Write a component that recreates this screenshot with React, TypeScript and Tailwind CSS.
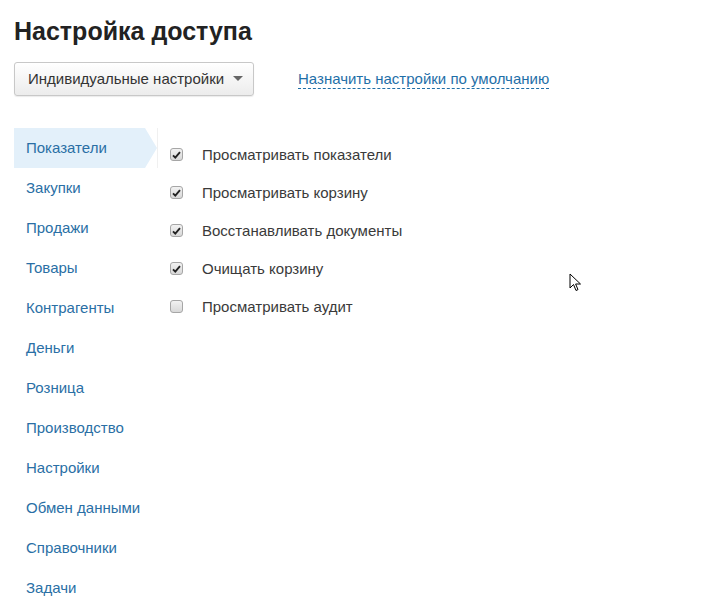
import React from 'react';

const sections = [
  'Показатели',
  'Закупки',
  'Продажи',
  'Товары',
  'Контрагенты',
  'Деньги',
  'Розница',
  'Производство',
  'Настройки',
  'Обмен данными',
  'Справочники',
  'Задачи',
];

const permissions = [
  { label: 'Просматривать показатели', checked: true },
  { label: 'Просматривать корзину', checked: true },
  { label: 'Восстанавливать документы', checked: true },
  { label: 'Очищать корзину', checked: true },
  { label: 'Просматривать аудит', checked: false },
];

function Checkbox({ checked }: { checked: boolean }) {
  return (
    <span className="flex h-[13px] w-[13px] items-center justify-center rounded-[3px] border border-[#a6a6a6] bg-gradient-to-b from-[#f2f2f2] to-[#d8d8d8]">
      {checked && (
        <svg width="9" height="8" viewBox="0 0 9 8">
          <path d="M1 4.3 L3.3 6.6 L8 1.2" fill="none" stroke="#222" strokeWidth="1.9" />
        </svg>
      )}
    </span>
  );
}

export default function App() {
  return (
    <div className="relative h-[616px] w-[702px] bg-white font-['Liberation_Sans',Arial,sans-serif]">
      <div className="px-[14px] pt-[16px]">
        <h1 className="text-[25px] font-bold leading-[30px] text-[#222]">Настройка доступа</h1>

        <div className="mt-[16px] flex items-center">
          <button className="flex h-[34px] w-[240px] items-center rounded-[3px] border border-[#c8c8c8] bg-gradient-to-b from-white to-[#ececec] pl-[13px] pr-[10px] text-[15px] text-[#333] shadow-[0_1px_1px_rgba(0,0,0,0.08)]">
            <span>Индивидуальные настройки</span>
            <svg className="ml-auto" width="10" height="6" viewBox="0 0 10 6">
              <path d="M0 0 H10 L5 5 Z" fill="#666" />
            </svg>
          </button>
          <a className="ml-[44px] border-b border-dashed border-[#1f6fa8] text-[15px] leading-[18px] text-[#1f6fa8]">
            Назначить настройки по умолчанию
          </a>
        </div>

        <div className="mt-[32px] flex">
          <ul className="w-[143px] shrink-0">
            {sections.map((s, i) => (
              <li
                key={s}
                className={`flex h-[40px] items-center pl-[12px] text-[15px] text-[#2a6fa5] ${
                  i === 0 ? 'bg-[#e3f0fa] [clip-path:polygon(0_0,131px_0,143px_50%,131px_100%,0_100%)]' : ''
                }`}
              >
                {s}
              </li>
            ))}
          </ul>
          <div className="border-l border-[#f0f0f0] h-[40px]" />
          <ul className="pl-[12px] pt-[17px]">
            {permissions.map((p) => (
              <li key={p.label} className="flex h-[38px] items-start text-[15px] text-[#3a3a3a]">
                <span className="mt-[3px]">
                  <Checkbox checked={p.checked} />
                </span>
                <span className="ml-[19px] leading-[20px]">{p.label}</span>
              </li>
            ))}
          </ul>
        </div>
      </div>

      <svg className="absolute left-[569px] top-[273px]" width="13" height="20" viewBox="0 0 13 20">
        <path d="M1 1 V15 L4.5 11.5 L7 17.5 L9 16.6 L6.6 11 H11.5 Z" fill="#fff" stroke="#000" strokeWidth="1" strokeLinejoin="round" />
      </svg>
    </div>
  );
}
